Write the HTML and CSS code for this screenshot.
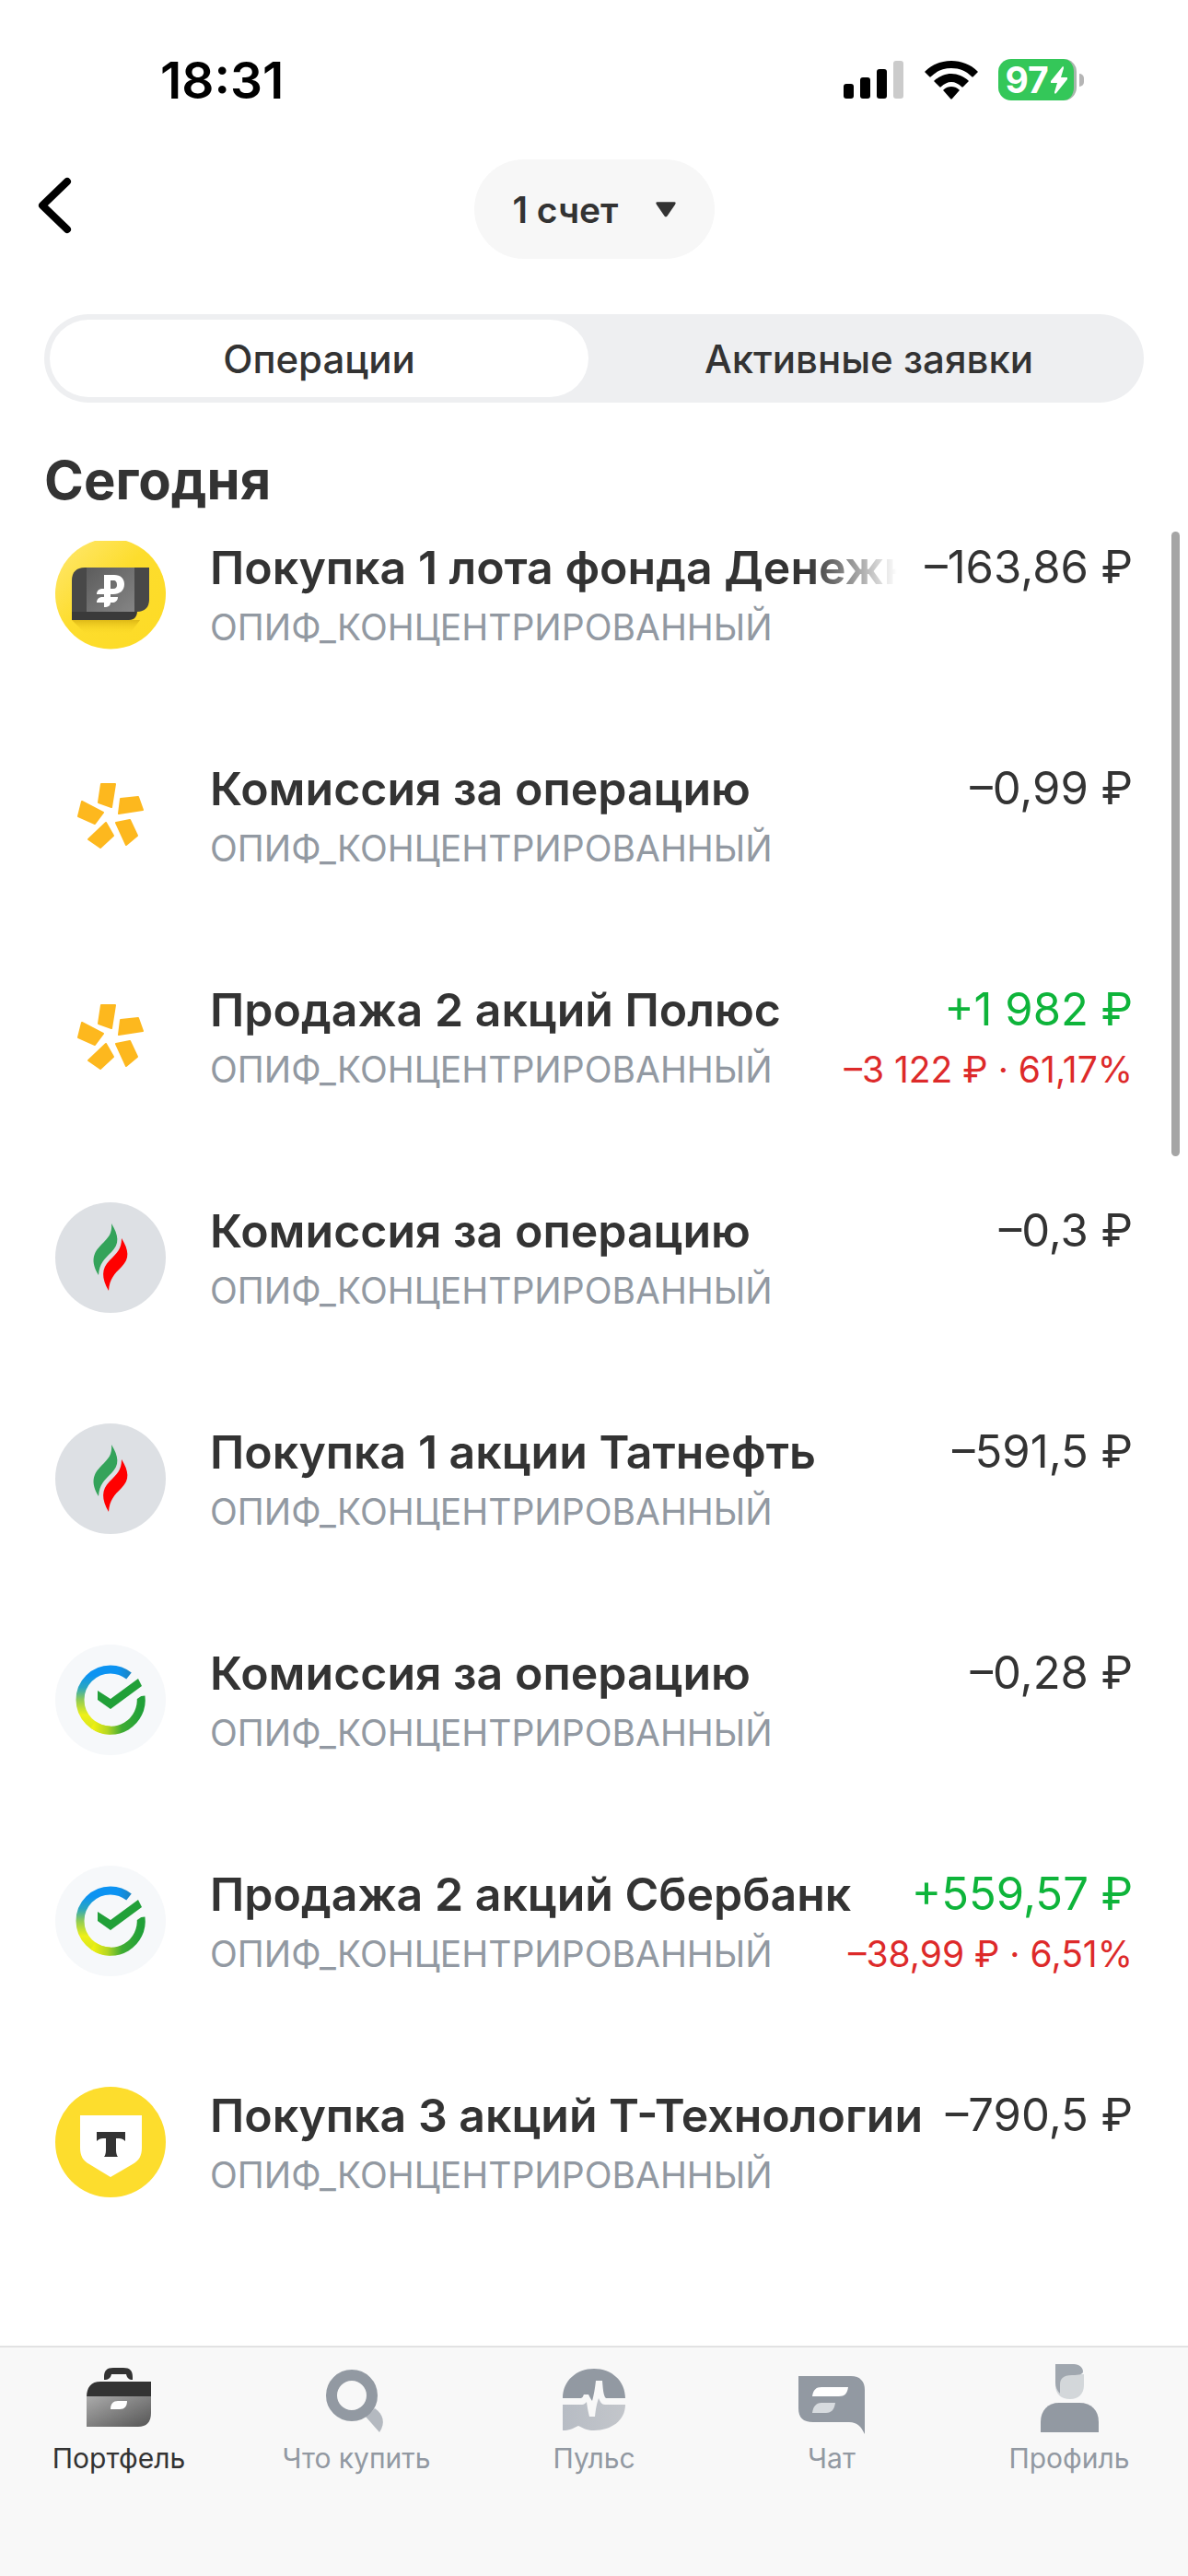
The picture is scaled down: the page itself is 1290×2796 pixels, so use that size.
FILE: index.html
```html
<!DOCTYPE html>
<html lang="ru">
<head>
  <meta charset="UTF-8">
  <meta name="viewport" content="width=device-width, initial-scale=1.0">
  <title>Операции</title>
  <link rel="stylesheet" href="styles.css">
</head>
<body>

<!-- Company logos -->
<svg class="sprite" aria-hidden="true">
  <defs>
    <linearGradient id="sber-left" x1="0" y1="0" x2="0" y2="1">
      <stop offset="0.1" stop-color="#0c93f2"/>
      <stop offset="0.3" stop-color="#2aa6c0"/>
      <stop offset="0.5" stop-color="#8fcb55"/>
      <stop offset="0.75" stop-color="#eef018"/>
      <stop offset="1" stop-color="#d8e61c"/>
    </linearGradient>
    <linearGradient id="sber-bottom" x1="0" y1="0" x2="1" y2="0">
      <stop offset="0" stop-color="#f0f00f"/>
      <stop offset="0.3" stop-color="#b4d623"/>
      <stop offset="0.6" stop-color="#3fac33"/>
      <stop offset="1" stop-color="#21a038"/>
    </linearGradient>
    <linearGradient id="sber-top" x1="0" y1="0" x2="1" y2="0">
      <stop offset="0" stop-color="#0c93f2"/>
      <stop offset="0.4" stop-color="#0c93f2"/>
      <stop offset="1" stop-color="#1a86c8"/>
    </linearGradient>
    <linearGradient id="fund-bg" x1="0" y1="0" x2="1" y2="1">
      <stop offset="0" stop-color="#ffe873"/>
      <stop offset="0.45" stop-color="#fddd2d"/>
      <stop offset="1" stop-color="#fddb25"/>
    </linearGradient>
    <linearGradient id="fund-front" x1="0" y1="0" x2="1" y2="1">
      <stop offset="0" stop-color="#5c5c5c"/>
      <stop offset="1" stop-color="#858585"/>
    </linearGradient>
    <linearGradient id="fund-shadow" x1="0" y1="0" x2="0" y2="1">
      <stop offset="0" stop-color="#b98e00" stop-opacity="0.45"/>
      <stop offset="1" stop-color="#fddb25" stop-opacity="0"/>
    </linearGradient>
    <linearGradient id="case-body" x1="0" y1="0" x2="1" y2="1">
      <stop offset="0" stop-color="#ababab"/>
      <stop offset="1" stop-color="#555"/>
    </linearGradient>
    <linearGradient id="pulse-low" x1="0" y1="0" x2="1" y2="0">
      <stop offset="0" stop-color="#b7bcc4"/>
      <stop offset="1" stop-color="#c3c6cb"/>
    </linearGradient>
  </defs>

  <symbol id="logo-polus" viewBox="0 0 120 120">
    <g fill="#fdb81e" stroke="#fdb81e" stroke-width="2" stroke-linejoin="round">
      <path d="M50 26h15l-4 25-14-5z"/>
      <path d="M71 42l19-2 5 14-26 4z"/>
      <path d="M29 45l23 12-9 12-18-8z"/>
      <path d="M55 68l8 14-14 13-13-9z"/>
      <path d="M66 68l15-3 8 17-12 10z"/>
    </g>
  </symbol>
  <symbol id="logo-tatneft" viewBox="0 0 120 120">
    <circle cx="60" cy="60" r="60" fill="#dde0e4"/>
    <path d="M61 23c8 13 9 22 0 31-8 8-13 12-14 25-9-15-6-24 3-33 8-8 12-12 11-23z" fill="#34a35a"/>
    <path d="M72 39c8 13 9 22 0 31-8 8-13 13-14 26-8-14-8-24 1-33 8-8 13-12 13-24z" fill="#f00"/>
  </symbol>
  <symbol id="logo-sber" viewBox="0 0 120 120">
    <circle cx="60" cy="60" r="60" fill="#f6f8fa"/>
    <path d="M60 27A33 33 0 0 0 60 93" fill="none" stroke="url(#sber-left)" stroke-width="9"/>
    <path d="M60 27A33 33 0 0 1 80 34" fill="none" stroke="url(#sber-top)" stroke-width="9"/>
    <path d="M41 87A33 33 0 0 0 93 56" fill="none" stroke="url(#sber-bottom)" stroke-width="9"/>
    <path d="M86 61l13-9-2-6-11 7z" fill="#f6f8fa"/>
    <path d="M46 50l14 9 30-22 4 8-34 25-14-10z" fill="#21a038"/>
  </symbol>
  <symbol id="logo-fund" viewBox="0 0 120 120">
    <path d="M43 2h34a60 60 0 1 1-34 0z" fill="url(#fund-bg)"/>
    <path d="M18 88h74l-12 16H34z" fill="url(#fund-shadow)"/>
    <path d="M18 78h71c0 6-3 10-9 10H18z" fill="#3a3a3a"/>
    <path d="M32 31h70v35c0 8-5 13-13 13H18V45c0-9 5-14 14-14z" fill="#484848"/>
    <path d="M34 31h52v48H34z" fill="url(#fund-front)"/>
    <path d="M53 39h11c7 0 11 4 11 10 0 7-5 11-12 11h-3v3h8c0 4-3 6-6 6h-2c0 3-2 5-7 5v-5h-8c0-4 3-6 6-6h2v-3h-8c0-4 3-6 6-6h2zM60 45v9h3c3 0 4-2 4-4 0-3-1-5-4-5z" fill="#fff" fill-rule="evenodd"/>
  </symbol>
  <symbol id="logo-t" viewBox="0 0 120 120">
    <circle cx="60" cy="60" r="60" fill="#fddd2d"/>
    <path d="M27 31h67v35c0 9-3 14-10 18L60 98 37 84c-7-4-10-9-10-18z" fill="#fff"/>
    <path d="M45 49h31v10c-2-2-4-3-7-3h-3v13c0 3 1 6 2 7H53c1-1 2-4 2-7V56h-3c-3 0-5 1-7 3z" fill="#333"/>
  </symbol>
</svg>

<div class="status-bar">
  <span class="clock">18:31</span>
  <div class="status-icons">
    <svg width="66" height="42" viewBox="0 0 66 42">
      <rect x="0" y="25" width="11" height="16" rx="3"/>
      <rect x="18" y="18" width="11" height="23" rx="3"/>
      <rect x="36" y="9" width="11" height="32" rx="3"/>
      <rect x="54" y="0" width="11" height="41" rx="3" fill="#cbcbcb"/>
    </svg>
    <svg width="58" height="42" viewBox="0 0 58 42">
      <path d="M29 0c11 0 21 4 28 11 1 1 1 1 0 2l-4 4c-1 1-1 1-2 0C45 11 38 8 29 8S13 11 7 17c-1 1-1 1-2 0l-4-4c-1-1-1-1 0-2C8 4 18 0 29 0z"/>
      <path d="M29 14c7 0 13 3 18 7 1 1 1 1 0 2l-5 5c-1 1-1 1-2 0-3-3-7-5-11-5s-8 2-11 5c-1 1-1 1-2 0l-5-5c-1-1-1-1 0-2 5-4 11-7 18-7z"/>
      <path d="M29 28c3 0 6 1 8 3 1 1 1 1 0 2l-7 8c-1 1-1 1-2 0l-7-8c-1-1-1-1 0-2 2-2 5-3 8-3z"/>
    </svg>
    <div class="battery">
      <span>97</span>
      <svg width="18" height="30" viewBox="0 0 18 30"><path d="M13 0L0 16c-1 1 0 2 1 2h6L4 28c0 2 1 2 2 1l12-15c1-1 0-2-1-2h-6l3-10c0-2-1-2-1-2z" fill="#fff"/></svg>
    </div>
  </div>
</div>

<header class="header">
  <button class="back" aria-label="Назад">
    <svg width="38" height="62" viewBox="0 0 38 62"><path d="M33 5L6 31l27 26" fill="none" stroke="#000" stroke-width="8" stroke-linecap="round" stroke-linejoin="round"/></svg>
  </button>
  <div class="account">
    <select aria-label="Счет">
      <option>1 счет</option>
    </select>
    <svg class="arrow" width="22" height="17" viewBox="0 0 24 18"><path d="M2 0h20c2 0 2 1 1 3l-9 13c-1 2-3 2-4 0L1 3C0 1 0 0 2 0z" fill="#333"/></svg>
  </div>
</header>

<div class="tabs" role="tablist">
  <button class="tab active" role="tab" aria-selected="true">Операции</button>
  <button class="tab" role="tab" aria-selected="false">Активные заявки</button>
</div>

<main>
  <h1>Сегодня</h1>
  <div class="scrollbar"></div>
  <ul class="operations">
    <li class="operation">
      <svg class="logo"><use href="#logo-fund"/></svg>
      <div class="info">
        <div class="line">
          <span class="title fade">Покупка 1 лота фонда Денежн</span>
          <span class="amount">–163,86 ₽</span>
        </div>
        <div class="line small">
          <span class="portfolio">ОПИФ_КОНЦЕНТРИРОВАННЫЙ</span>
        </div>
      </div>
    </li>
    <li class="operation">
      <svg class="logo"><use href="#logo-polus"/></svg>
      <div class="info">
        <div class="line">
          <span class="title">Комиссия за операцию</span>
          <span class="amount">–0,99 ₽</span>
        </div>
        <div class="line small">
          <span class="portfolio">ОПИФ_КОНЦЕНТРИРОВАННЫЙ</span>
        </div>
      </div>
    </li>
    <li class="operation">
      <svg class="logo"><use href="#logo-polus"/></svg>
      <div class="info">
        <div class="line">
          <span class="title">Продажа 2 акций Полюс</span>
          <span class="amount plus">+1 982 ₽</span>
        </div>
        <div class="line small">
          <span class="portfolio">ОПИФ_КОНЦЕНТРИРОВАННЫЙ</span>
          <span class="result">–3 122 ₽ · 61,17%</span>
        </div>
      </div>
    </li>
    <li class="operation">
      <svg class="logo"><use href="#logo-tatneft"/></svg>
      <div class="info">
        <div class="line">
          <span class="title">Комиссия за операцию</span>
          <span class="amount">–0,3 ₽</span>
        </div>
        <div class="line small">
          <span class="portfolio">ОПИФ_КОНЦЕНТРИРОВАННЫЙ</span>
        </div>
      </div>
    </li>
    <li class="operation">
      <svg class="logo"><use href="#logo-tatneft"/></svg>
      <div class="info">
        <div class="line">
          <span class="title">Покупка 1 акции Татнефть</span>
          <span class="amount">–591,5 ₽</span>
        </div>
        <div class="line small">
          <span class="portfolio">ОПИФ_КОНЦЕНТРИРОВАННЫЙ</span>
        </div>
      </div>
    </li>
    <li class="operation">
      <svg class="logo"><use href="#logo-sber"/></svg>
      <div class="info">
        <div class="line">
          <span class="title">Комиссия за операцию</span>
          <span class="amount">–0,28 ₽</span>
        </div>
        <div class="line small">
          <span class="portfolio">ОПИФ_КОНЦЕНТРИРОВАННЫЙ</span>
        </div>
      </div>
    </li>
    <li class="operation">
      <svg class="logo"><use href="#logo-sber"/></svg>
      <div class="info">
        <div class="line">
          <span class="title">Продажа 2 акций Сбербанк</span>
          <span class="amount plus">+559,57 ₽</span>
        </div>
        <div class="line small">
          <span class="portfolio">ОПИФ_КОНЦЕНТРИРОВАННЫЙ</span>
          <span class="result">–38,99 ₽ · 6,51%</span>
        </div>
      </div>
    </li>
    <li class="operation">
      <svg class="logo"><use href="#logo-t"/></svg>
      <div class="info">
        <div class="line">
          <span class="title">Покупка 3 акций Т-Технологии</span>
          <span class="amount">–790,5 ₽</span>
        </div>
        <div class="line small">
          <span class="portfolio">ОПИФ_КОНЦЕНТРИРОВАННЫЙ</span>
        </div>
      </div>
    </li>
  </ul>
</main>

<nav class="navbar">
  <a href="#" class="current">
    <svg viewBox="0 0 80 80">
      <path d="M24 19v-3C24 9 27 6 34 6h11c7 0 10 3 10 10v3c-4 0-6-2-7-6H32c-1 4-3 6-8 6z" fill="#333"/>
      <path d="M5 38C5 27 10 21 20 21h55v17z" fill="#333"/>
      <path d="M5 37h70v18c0 10-5 15-14 15H5z" fill="url(#case-body)"/>
      <path d="M31 51c0-6 3-9 8-9h10c0 6-3 9-8 9z" fill="#fff"/>
    </svg>
    Портфель
  </a>
  <a href="#">
    <svg viewBox="0 0 80 80">
      <path d="M50 59l10-9c9 6 12 16 5 26z" fill="#b4b9c0"/>
      <circle cx="35" cy="36" r="22" fill="none" stroke="#9299a2" stroke-width="12"/>
    </svg>
    Что купить
  </a>
  <a href="#">
    <svg viewBox="0 0 80 80">
      <path d="M6 39C6 20 21 7 40 7s34 13 34 32H53c-2-2-3-5-4-19h-7c-1 9-2 15-4 22-2-3-3-5-4-7h-5c-1 2-1 3-3 4z" fill="#9299a2"/>
      <path d="M6 46h21c2 0 4-2 5-3 1 8 2 12 3 16h6c1-9 2-14 4-20 2 4 3 7 7 7h22c0 17-15 28-34 28-7 0-11-2-17-5-6 3-10 5-17 5z" fill="url(#pulse-low)"/>
    </svg>
    Пульс
  </a>
  <a href="#">
    <svg viewBox="0 0 80 80">
      <path d="M4 15h57c10 0 15 6 15 15v48c-4-8-8-13-17-13H20C9 65 4 60 4 50z" fill="#9299a2"/>
      <path d="M19 37c1-7 4-10 10-10h29c-1 7-4 10-10 10z" fill="#fff"/>
      <path d="M19 55c1-7 4-11 10-11h15c-1 7-4 11-10 11z" fill="#d7dbdf"/>
    </svg>
    Чат
  </a>
  <a href="#">
    <svg viewBox="0 0 80 80">
      <path d="M25 13h31v12c0 9-6 15-15 15-10 0-16-6-16-15z" fill="#d3d7da"/>
      <path d="M25 2h20c6 0 10 4 10 8 0 3-4 4-12 4-10 0-13 4-13 11v9c-3-3-5-7-5-12z" fill="#a0a7af"/>
      <path d="M9 76V65C9 52 17 44 29 44h22c13 0 21 8 21 21v11z" fill="#9299a2"/>
    </svg>
    Профиль
  </a>
</nav>

</body>
</html>
```
FILE: styles.css
```css
* {
  box-sizing: border-box;
}
body {
  font-family: Inter, "Liberation Sans", sans-serif;
  background-color: #fff;
  color: #333;
  margin: 0;
  min-height: 100vh;
  display: flex;
  flex-direction: column;
}
button, select {
  font: inherit;
  color: inherit;
  border: none;
  background: none;
  padding: 0;
  cursor: pointer;
}
.sprite {
  position: absolute;
  width: 0;
  height: 0;
}
.status-bar {
  display: flex;
  justify-content: space-between;
  align-items: center;
  height: 173px;
  padding: 0 113px 0 174px;
  color: #000;
}
.clock {
  font-size: 55px;
  font-weight: 600;
}
.status-icons {
  display: flex;
  align-items: center;
  gap: 22px;
}
.battery {
  position: relative;
  display: flex;
  align-items: center;
  justify-content: center;
  gap: 2px;
  width: 85px;
  height: 45px;
  margin-right: 8px;
  border-radius: 14px;
  border-right: 3px solid #a9b5ac;
  background-color: #34c759;
  color: #fff;
  font-size: 39px;
  font-weight: 700;
}
.battery::after {
  content: "";
  position: absolute;
  right: -11px;
  width: 5px;
  height: 14px;
  border-radius: 0 5px 5px 0;
  background-color: #b5b5b5;
}
.header {
  display: grid;
  grid-template-columns: 1fr auto 1fr;
  align-items: center;
  padding: 0 40px;
}
.back {
  justify-self: start;
  display: flex;
  padding-bottom: 8px;
}
.account {
  position: relative;
  display: flex;
  align-items: center;
}
.account select {
  appearance: none;
  height: 108px;
  padding: 0 104px 0 42px;
  border-radius: 54px;
  background-color: #f7f7f7;
  font-size: 39px;
  font-weight: 600;
}
.arrow {
  position: absolute;
  right: 42px;
  pointer-events: none;
}
.tabs {
  display: flex;
  gap: 12px;
  margin: 60px 48px 0;
  padding: 6px;
  border-radius: 48px;
  background-color: #eeeff1;
}
.tab {
  flex: 1;
  height: 84px;
  border-radius: 42px;
  font-size: 42px;
  font-weight: 500;
}
.tab.active {
  background-color: #fff;
}
main {
  flex: 1;
  position: relative;
  padding: 46px 60px 0;
}
h1 {
  margin: 0 -12px;
  font-size: 58px;
  font-weight: 700;
  line-height: 76px;
}
.scrollbar {
  position: absolute;
  top: 140px;
  right: 9px;
  width: 9px;
  height: 678px;
  border-radius: 5px;
  background-color: #a5a5a5;
}
.operations {
  list-style: none;
  margin: 26px 0 0;
  padding: 0;
}
.operation {
  display: flex;
  gap: 48px;
  height: 240px;
}
.logo {
  flex: none;
  width: 120px;
  height: 120px;
}
.info {
  flex: 1;
  min-width: 0;
}
.line {
  display: flex;
  justify-content: space-between;
  gap: 24px;
  font-size: 49px;
  line-height: 62px;
  white-space: nowrap;
}
.line.small {
  margin-top: 10px;
  font-size: 39px;
  line-height: 48px;
}
.title {
  font-size: 50px;
  font-weight: 600;
}
/* long titles fade out before the amount */
.title.fade {
  overflow: hidden;
  margin-right: 6px;
  -webkit-mask-image: linear-gradient(to left, transparent, #000 96px);
  mask-image: linear-gradient(to left, transparent, #000 96px);
}
.portfolio {
  color: #9299a2;
}
.amount.plus {
  color: #0eb43a;
}
.result {
  color: #dd2a2a;
}
.navbar {
  display: flex;
  height: 250px;
  padding-top: 16px;
  border-top: 2px solid #e2e2e3;
  background-color: #f8f8f8;
}
.navbar a {
  flex: 1;
  display: flex;
  flex-direction: column;
  align-items: center;
  gap: 6px;
  color: #9299a2;
  font-size: 30px;
  line-height: 36px;
  text-decoration: none;
}
.navbar a.current {
  color: #333;
}
.navbar svg {
  width: 80px;
  height: 80px;
}
```
